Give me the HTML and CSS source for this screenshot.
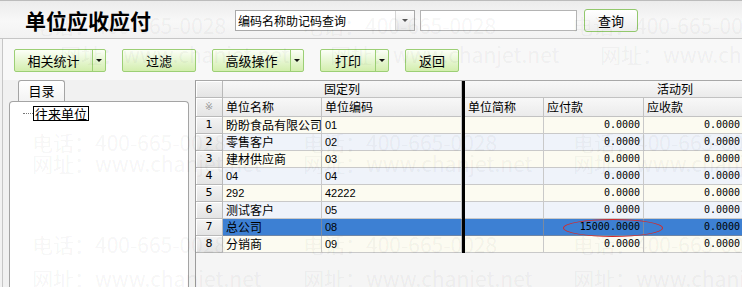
FILE: index.html
```html
<!DOCTYPE html>
<html lang="zh-CN">
<head>
<meta charset="utf-8">
<title>单位应收应付</title>
<link rel="stylesheet" href="styles.css">
</head>
<body>
<header class="titlebar">
  <h1 class="title">单位应收应付</h1>
  <div class="combo"><span class="combo-text">编码名称助记码查询</span><span class="combo-arrow"></span></div>
  <div class="search"></div>
  <button class="btn-query">查询</button>
</header>

<div class="toolbar">
  <div class="tbtn w92"><span class="lbl">相关统计</span><span class="drop"></span></div>
  <div class="tbtn w74"><span class="lbl">过滤</span></div>
  <div class="tbtn w92"><span class="lbl">高级操作</span><span class="drop"></span></div>
  <div class="tbtn w69"><span class="lbl">打印</span><span class="drop"></span></div>
  <div class="tbtn w54"><span class="lbl">返回</span></div>
</div>

<div class="main">
  <aside class="left">
    <div class="tabs"><div class="tab">目录</div></div>
    <div class="panel">
      <div class="tree-item"><span class="dots"></span><span class="node">往来单位</span></div>
    </div>
  </aside>

  <div class="grid">
    <div class="row h1">
      <div class="c rn"></div>
      <div class="c hd center span2">固定列</div>
      <div class="c bar"></div>
      <div class="c hd center span4">活动列</div>
    </div>
    <div class="row h2">
      <div class="c rn star">※</div>
      <div class="c hd">单位名称</div>
      <div class="c hd code">单位编码</div>
      <div class="c bar"></div>
      <div class="c hd">单位简称</div>
      <div class="c hd">应付款</div>
      <div class="c hd">应收款</div>
      <div class="c hd"></div>
    </div>

    <div class="row d odd">
      <div class="c rn">1</div><div class="c">盼盼食品有限公司</div><div class="c code lat">01</div><div class="c bar"></div>
      <div class="c"></div><div class="c num">0.0000</div><div class="c num">0.0000</div><div class="c"></div>
    </div>
    <div class="row d even">
      <div class="c rn">2</div><div class="c">零售客户</div><div class="c code lat">02</div><div class="c bar"></div>
      <div class="c"></div><div class="c num">0.0000</div><div class="c num">0.0000</div><div class="c"></div>
    </div>
    <div class="row d odd">
      <div class="c rn">3</div><div class="c">建材供应商</div><div class="c code lat">03</div><div class="c bar"></div>
      <div class="c"></div><div class="c num">0.0000</div><div class="c num">0.0000</div><div class="c"></div>
    </div>
    <div class="row d even">
      <div class="c rn">4</div><div class="c lat">04</div><div class="c code lat">04</div><div class="c bar"></div>
      <div class="c"></div><div class="c num">0.0000</div><div class="c num">0.0000</div><div class="c"></div>
    </div>
    <div class="row d odd">
      <div class="c rn">5</div><div class="c lat">292</div><div class="c code lat">42222</div><div class="c bar"></div>
      <div class="c"></div><div class="c num">0.0000</div><div class="c num">0.0000</div><div class="c"></div>
    </div>
    <div class="row d even">
      <div class="c rn">6</div><div class="c">测试客户</div><div class="c code lat">05</div><div class="c bar"></div>
      <div class="c"></div><div class="c num">0.0000</div><div class="c num">0.0000</div><div class="c"></div>
    </div>
    <div class="row d sel">
      <div class="c rn">7</div><div class="c">总公司</div><div class="c code lat">08</div><div class="c bar"></div>
      <div class="c"></div><div class="c num marked"><span class="mark"></span>15000.0000</div><div class="c num">0.0000</div><div class="c"></div>
    </div>
    <div class="row d odd">
      <div class="c rn">8</div><div class="c">分销商</div><div class="c code lat">09</div><div class="c bar"></div>
      <div class="c"></div><div class="c num">0.0000</div><div class="c num">0.0000</div><div class="c"></div>
    </div>
  </div>
</div>

<div class="wm" aria-hidden="true">
  <span class="t1 l1">电话：400-665-0028</span>
  <span class="t1 l2">电话：400-665-0028</span>
  <span class="t1 l3">电话：400-665-0028</span>
  <span class="t2 m1">网址：www.chanjet.net</span>
  <span class="t2 m2">网址：www.chanjet.net</span>
  <span class="t2 m3">网址：www.chanjet.net</span>
  <span class="t3 l1">电话：400-665-0028</span>
  <span class="t3 n2">电话：400-665-0028</span>
  <span class="t3 n3">电话：400-665-0028</span>
  <span class="t4 l1">网址：www.chanjet.net</span>
  <span class="t4 n2">网址：www.chanjet.net</span>
  <span class="t4 n3">网址：www.chanjet.net</span>
  <span class="t5 l1">电话：400-665-0028</span>
  <span class="t5 n2">电话：400-665-0028</span>
  <span class="t5 n3">电话：400-665-0028</span>
  <span class="t6 l1">网址：www.chanjet.net</span>
  <span class="t6 n2">网址：www.chanjet.net</span>
  <span class="t6 n3">网址：www.chanjet.net</span>
</div>
</body>
</html>
```

FILE: styles.css
```css
* { box-sizing: border-box; margin: 0; padding: 0; }

html, body { width: 742px; height: 287px; overflow: hidden; }

body {
  position: relative;
  font-family: "Noto Sans CJK SC", "DejaVu Sans", sans-serif;
  font-size: 12px;
  color: #000;
  background: #f2f2f2;
}

/* ---------- title bar ---------- */
.titlebar {
  height: 39px;
  display: flex;
  align-items: center;
  padding: 1px 0 0 25px;
  border-top: 1px solid #bcbcbc;
  border-bottom: 1px solid #c6c6c6;
  background: linear-gradient(#ececec, #f8f8f8 55%, #f2f2f2);
}

.title {
  flex: 0 0 210px;
  font-size: 21px;
  font-weight: bold;
  line-height: 24px;
}

.combo {
  width: 180px;
  height: 21px;
  display: flex;
  border: 1px solid #a9a9a9;
  background: #fff;
}

.combo-text {
  flex: 1;
  padding-left: 2px;
  line-height: 19px;
  font-size: 12px;
}

.combo-arrow {
  width: 19px;
  display: flex;
  align-items: center;
  justify-content: center;
  border-left: 1px solid #d4d4d4;
  background: linear-gradient(#fdfdfd, #e9e9e9);
}

.combo-arrow::after {
  content: "";
  border-left: 3px solid transparent;
  border-right: 3px solid transparent;
  border-top: 3px solid #555;
}

.search {
  width: 157px;
  height: 21px;
  margin-left: 5px;
  border: 1px solid #b4b4b4;
  background: #fff;
}

.btn-query {
  width: 54px;
  height: 23px;
  margin-left: 7px;
  border: 1px solid #92c86c;
  border-radius: 3px;
  background: linear-gradient(#ffffff, #eeeeee);
  font-family: inherit;
  font-size: 13px;
  color: #000;
}

/* ---------- toolbar ---------- */
.toolbar {
  height: 41px;
  margin-left: 2px;
  padding: 10px 0 0 11px;
  display: flex;
  align-items: flex-start;
  gap: 16px;
  border-left: 1px solid #c6c6c6;
  background: #f8f8f8;
}

.tbtn {
  height: 23px;
  display: flex;
  border: 1px solid #9ccf75;
  border-radius: 2px;
  background: linear-gradient(#fcfff7, #e9f7d6 45%, #d3eeae);
  font-size: 13px;
}

.tbtn .lbl {
  flex: 1;
  text-align: center;
  line-height: 21px;
}

.tbtn .drop {
  width: 13px;
  display: flex;
  align-items: center;
  justify-content: center;
  border-left: 1px solid #9ccf75;
}

.tbtn .drop::after {
  content: "";
  border-left: 3px solid transparent;
  border-right: 3px solid transparent;
  border-top: 3px solid #111;
}

.w92 { width: 92px; }
.w74 { width: 74px; }
.w69 { width: 69px; }
.w54 { width: 54px; }

/* ---------- main ---------- */
.main {
  height: 207px;
  margin-left: 2px;
  padding-left: 6px;
  display: flex;
  border-left: 1px solid #c6c6c6;
  background: #f1f1f1;
}

.left {
  width: 180px;
  display: flex;
  flex-direction: column;
}

.tabs {
  height: 21px;
  padding-left: 9px;
  display: flex;
}

.tab {
  width: 47px;
  height: 21px;
  border: 1px solid #a4a4a4;
  border-bottom: none;
  border-radius: 3px 3px 0 0;
  background: linear-gradient(#ffffff, #f3f3f3);
  text-align: center;
  line-height: 20px;
  font-size: 13px;
}

.panel {
  flex: 1;
  border: 1px solid #a4a4a4;
  border-bottom: none;
  border-radius: 4px 4px 0 0;
  background: #fff;
  padding: 4px 0 0 13px;
}

.tree-item {
  display: flex;
  align-items: center;
}

.dots {
  width: 10px;
  border-top: 1px dotted #777;
}

.node {
  border: 1px solid #000;
  font-size: 13px;
  line-height: 13px;
  padding: 0 1px;
}

/* ---------- grid ---------- */
.grid {
  flex: 1;
  margin-left: 6px;
  border-left: 1px solid #9c9c9c;
  border-top: 1px solid #a8a8a8;
  background: #f5f5f5;
  overflow: hidden;
}

.row {
  display: grid;
  grid-template-columns: 27px 99px 140px 3px 79px 100px 100px 142px;
  width: max-content;
}

.row.h1 { height: 17px; }
.row.h2 { height: 19px; }
.row.d { height: 17px; }

.c {
  border-right: 1px solid #c9c9c9;
  border-bottom: 1px solid #c9c9c9;
  padding: 0 3px;
  white-space: nowrap;
  overflow: hidden;
  line-height: 16px;
}

.h2 .c { line-height: 18px; }

.span2 { grid-column: span 2; }
.span4 { grid-column: span 4; }

.hd {
  background: linear-gradient(#f8f8f8, #ebebeb);
  border-color: #c2c2c2;
}

.center { text-align: center; }

.bar {
  background: #000;
  border: none;
  padding: 0;
}

.rn {
  padding: 0;
  text-align: center;
  background: linear-gradient(#f4f4f4, #e4e4e4);
  border-color: #b9b9b9;
  box-shadow: inset 1px 1px 0 #fff;
  font-family: "DejaVu Sans", sans-serif;
  font-size: 11px;
}

.star {
  color: #9a9a9a;
  font-size: 10px;
}

.lat {
  font-family: "Liberation Sans", sans-serif;
  font-size: 11px;
}

.num {
  text-align: right;
  font-family: "DejaVu Sans Mono", monospace;
  font-size: 10px;
}

.odd .c:not(.rn):not(.bar) { background: #fcfbf1; }
.even .c:not(.rn):not(.bar) { background: #eff3fa; }
.sel .c:not(.rn):not(.bar) {
  background: #3d80d3;
  border-right-color: #7a8aa0;
  border-bottom-color: #6f86a6;
}

.marked { position: relative; overflow: visible; }

.mark {
  position: absolute;
  left: 19px;
  top: 0;
  width: 100px;
  height: 18px;
  border: 1px solid #d42a2a;
  border-radius: 50%;
  z-index: 2;
}

/* ---------- watermark ---------- */
.wm {
  position: absolute;
  inset: 0;
  pointer-events: none;
  z-index: 10;
}

.wm span {
  position: absolute;
  font-family: "Noto Sans CJK SC", "DejaVu Sans", sans-serif;
  font-size: 21px;
  line-height: 21px;
  white-space: nowrap;
  color: rgba(0, 0, 0, 0.055);
}

.t1 { top: 15px; }
.t2 { top: 44px; }
.t3 { top: 132px; }
.t4 { top: 153px; }
.t5 { top: 234px; }
.t6 { top: 268px; }

.l1 { left: 32px; }
.l2 { left: 302px; }
.l3 { left: 572px; }
.m1 { left: 60px; }
.m2 { left: 330px; }
.m3 { left: 600px; }
.n2 { left: 303px; }
.n3 { left: 573px; }
```
